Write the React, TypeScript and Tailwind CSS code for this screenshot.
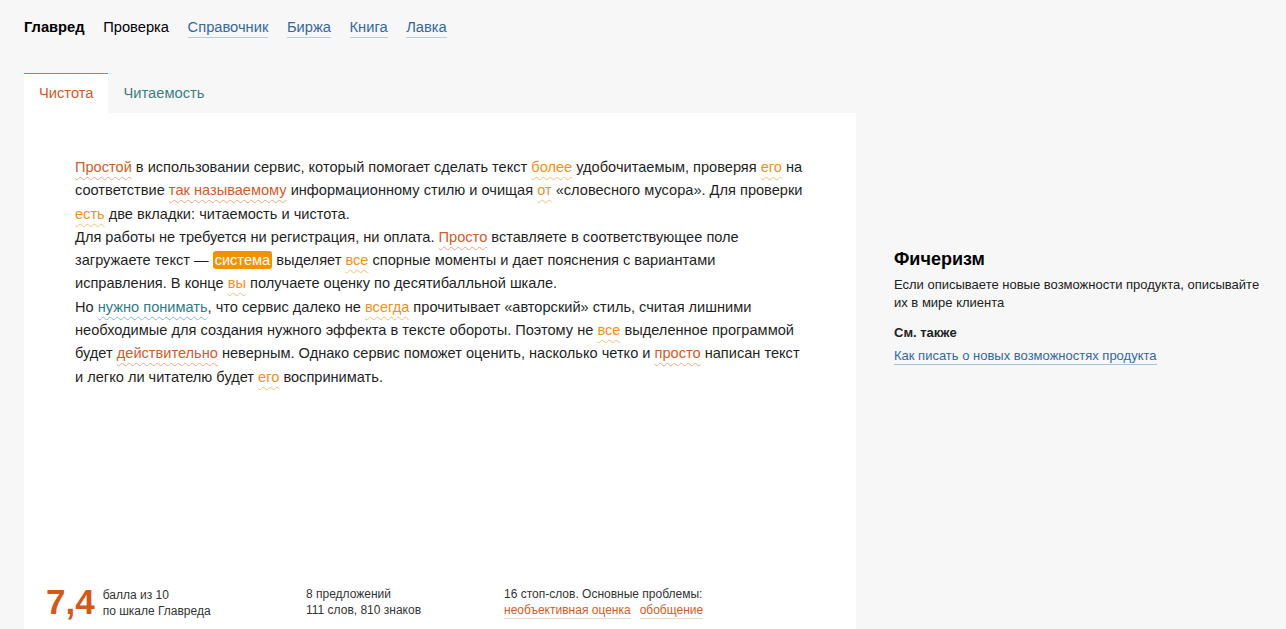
import React from "react";

type Mark = "red" | "orange" | "teal";

const markClass: Record<Mark, string> = {
  red: "text-[#cf5b27] decoration-[#e9a583]",
  orange: "text-[#f0901a] decoration-[#f5bd70]",
  teal: "text-[#2f7b8a] decoration-[#7fb6c0]",
};

function W({ c, children }: { c: Mark; children: React.ReactNode }) {
  return (
    <span
      className={`${markClass[c]} underline decoration-wavy decoration-1 underline-offset-[4px]`}
    >
      {children}
    </span>
  );
}

const navItems = [
  { label: "Главред", kind: "current" },
  { label: "Проверка", kind: "plain" },
  { label: "Справочник", kind: "link" },
  { label: "Биржа", kind: "link" },
  { label: "Книга", kind: "link" },
  { label: "Лавка", kind: "link" },
];

export default function App() {
  return (
    <div className="min-h-screen bg-[#f7f7f7] font-['Liberation_Sans',Arial,sans-serif] text-[#1a1a1a]">
      <nav className="flex gap-[18.6px] px-[24px] pt-[17px] text-[14.7px] leading-[20px]">
        {navItems.map((item) =>
          item.kind === "current" ? (
            <span key={item.label} className="font-bold text-black">
              {item.label}
            </span>
          ) : item.kind === "plain" ? (
            <span key={item.label} className="text-black">
              {item.label}
            </span>
          ) : (
            <a
              key={item.label}
              href="#"
              className="border-b border-[#b9cce0] text-[#35689b]"
            >
              {item.label}
            </a>
          )
        )}
      </nav>

      <div className="mt-[35px] flex gap-[38px] pl-[24px]">
        <div className="w-[832px] shrink-0">
          <div className="flex h-[40px] text-[14.7px]">
            <div className="flex items-center border-t border-[#d5733f] bg-white px-[15px] text-[#cf5b27]">
              Чистота
            </div>
            <div className="flex items-center px-[15px] text-[#3b7f80]">
              Читаемость
            </div>
          </div>

          <div className="flex min-h-[517px] flex-col bg-white">
            <div className="w-[786px] pl-[51px] pt-[43px] text-[14.6px] leading-[23.3px] text-[#1f1f1f]">
              <p>
                <W c="red">Простой</W> в использовании сервис, который помогает сделать текст{" "}
                <W c="orange">более</W> удобочитаемым, проверяя <W c="orange">его</W> на
                соответствие <W c="red">так называемому</W> информационному стилю и очищая{" "}
                <W c="orange">от</W> «словесного мусора». Для проверки{" "}
                <W c="orange">есть</W> две вкладки: читаемость и чистота.
              </p>
              <p>
                Для работы не требуется ни регистрация, ни оплата. <W c="red">Просто</W>{" "}
                вставляете в соответствующее поле загружаете текст —{" "}
                <span className="rounded-[3px] bg-[#f39200] px-[2px] py-[1px] text-white">
                  система
                </span>{" "}
                выделяет <W c="orange">все</W> спорные моменты и дает пояснения с вариантами
                исправления. В конце <W c="orange">вы</W> получаете оценку по десятибалльной
                шкале.
              </p>
              <p>
                Но <W c="teal">нужно понимать</W>, что сервис далеко не{" "}
                <W c="orange">всегда</W> прочитывает «авторский» стиль, считая лишними
                необходимые для создания нужного эффекта в тексте обороты. Поэтому не{" "}
                <W c="orange">все</W> выделенное программой будет{" "}
                <W c="red">действительно</W> неверным. Однако сервис поможет оценить,
                насколько четко и <W c="red">просто</W> написан текст и легко ли читателю
                будет <W c="orange">его</W> воспринимать.
              </p>
            </div>

            <div className="mt-auto flex items-start pb-[8px] pl-[22px] text-[12px] leading-[16px] text-[#333]">
              <div className="flex w-[260px] items-start gap-[8px]">
                <span className="-mt-[4px] text-[35px] font-bold leading-[40px] text-[#d2581c]">
                  7,4
                </span>
                <div className="pt-[1px]">
                  <div>балла из 10</div>
                  <div>по шкале Главреда</div>
                </div>
              </div>
              <div className="w-[198px]">
                <div>8 предложений</div>
                <div>111 слов, 810 знаков</div>
              </div>
              <div>
                <div>16 стоп-слов. Основные проблемы:</div>
                <div className="flex gap-[9px] text-[#cf5b27]">
                  <span className="border-b border-[#f1d3c3]">необъективная оценка</span>
                  <span className="border-b border-[#f1d3c3]">обобщение</span>
                </div>
              </div>
            </div>
          </div>
        </div>

        <aside className="w-[380px] pt-[175px]">
          <h2 className="text-[18px] font-bold leading-[22px] text-black">Фичеризм</h2>
          <p className="mt-[6px] text-[13px] leading-[18px] text-[#222]">
            Если описываете новые возможности продукта, описывайте их в мире клиента
          </p>
          <div className="mt-[12px] text-[13px] font-bold leading-[18px] text-[#222]">
            См. также
          </div>
          <a
            href="#"
            className="mt-[6px] inline-block border-b border-[#a9c2d8] text-[13px] leading-[16px] text-[#35689b]"
          >
            Как писать о новых возможностях продукта
          </a>
        </aside>
      </div>
    </div>
  );
}
